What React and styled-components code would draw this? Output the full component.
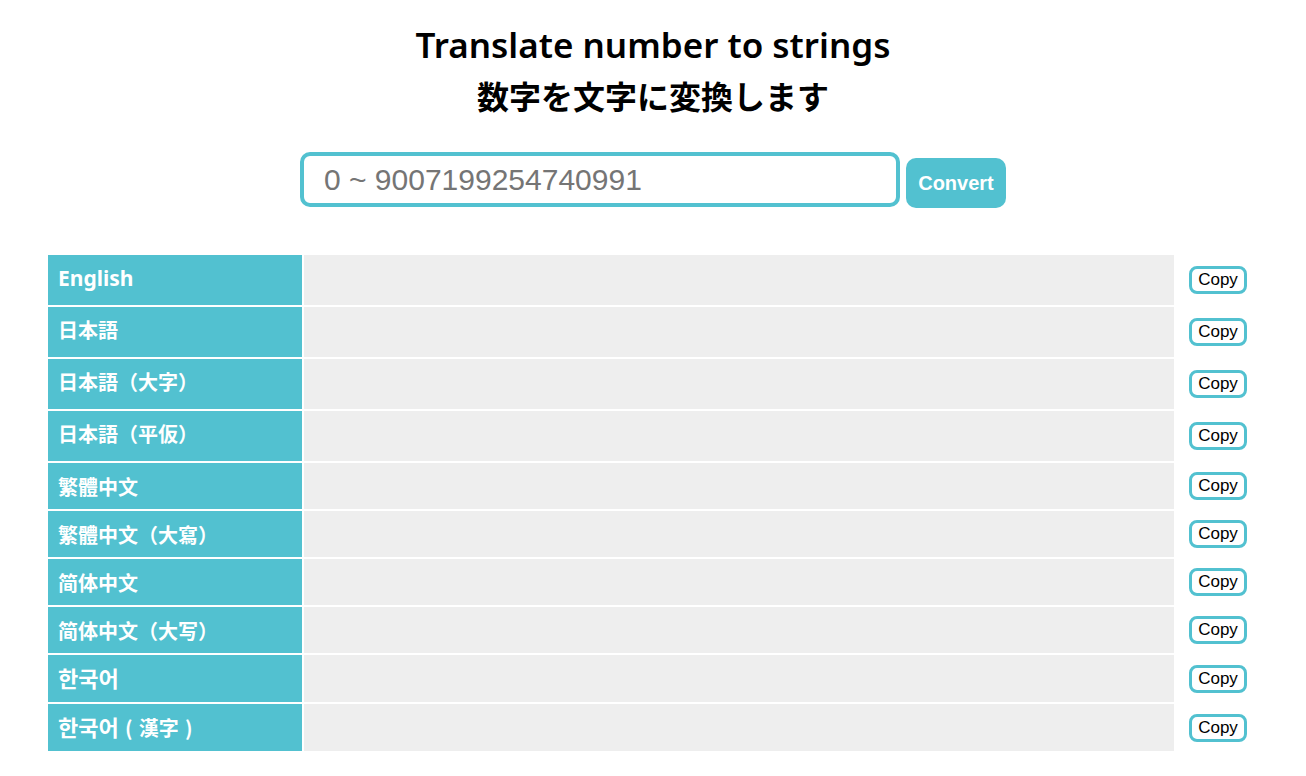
import React, { useState } from "react";
import styled, { createGlobalStyle } from "styled-components";

const accent = "#52c1d0";
const sans = '"Liberation Sans", Arial, sans-serif';

const fonts = {
  en: '"Noto Sans", sans-serif',
  ja: '"Noto Sans CJK JP", sans-serif',
  zh: '"Noto Sans CJK SC", sans-serif',
  ko: '"Noto Sans CJK KR", sans-serif',
  hanja: '"Noto Sans CJK TC", sans-serif',
};

const GlobalStyle = createGlobalStyle`
  *, *::before, *::after { box-sizing: border-box; }
  body { margin: 0; background: #fff; color: #000; }
`;

const Page = styled.main`
  padding: 19px 46px;
`;

const Title = styled.h1`
  margin: 0;
  text-align: center;
  font-family: ${fonts.ja};
  font-size: 32px;
  font-weight: 700;
  line-height: 48px;
`;

const TitleLine = styled.span`
  display: block;
`;

const LatinLine = styled(TitleLine)`
  font-family: ${fonts.en};
  font-size: 35px;
  font-weight: 600;
  line-height: 52px;
`;

const ConvertForm = styled.form`
  display: flex;
  justify-content: center;
  align-items: flex-end;
  gap: 6px;
  margin: 33px 0 45px;
`;

const NumberInput = styled.input`
  width: 600px;
  height: 55px;
  margin-bottom: 1px;
  padding: 0 20px;
  border: 4px solid ${accent};
  border-radius: 10px;
  background: #fff;
  font-family: ${sans};
  font-size: 30px;
  &::placeholder { color: #757575; }
`;

const ConvertButton = styled.button`
  width: 100px;
  height: 50px;
  padding: 0;
  border: 0;
  border-radius: 10px;
  background: ${accent};
  color: #fff;
  font-family: ${sans};
  font-size: 20px;
  font-weight: 700;
  cursor: pointer;
`;

const ResultTable = styled.table`
  width: 100%;
  table-layout: fixed;
  border-collapse: separate;
  border-spacing: 2px;
`;

const LabelColumn = styled.col`
  width: 254px;
`;

const CopyColumn = styled.col`
  width: 82px;
`;

const ResultRow = styled.tr`
  height: ${({ $height }) => $height}px;
`;

const LabelCell = styled.th`
  padding: ${({ $font }) => ($font === "zh" || $font === "ko" ? 9 : 8)}px 10px 6px;
  background: ${accent};
  color: #fff;
  text-align: left;
  vertical-align: top;
  font-family: ${({ $font }) => fonts[$font]};
  font-size: ${({ $font }) => ($font === "en" ? 21 : 20)}px;
  font-weight: 700;
  line-height: 30px;
`;

const Hangul = styled.span`
  font-family: ${fonts.ko};
  font-size: 22px;
  line-height: 24px;
`;

const Hanja = styled.span`
  font-family: ${fonts.hanja};
`;

const WideParen = styled.span`
  display: inline-block;
  width: 20px;
  text-align: center;
`;

const ResultCell = styled.td`
  padding: 0 10px;
  background: #eee;
  font-family: ${fonts.ja};
  font-size: 20px;
`;

const CopyCell = styled.td`
  padding: 0 0 0 13px;
  line-height: 0;
`;

const CopyButton = styled.button`
  width: 58px;
  height: 28px;
  padding: 0;
  border: 3px solid ${accent};
  border-radius: 8px;
  background: #fff;
  color: #000;
  font-family: ${sans};
  font-size: 17px;
  line-height: 20px;
  cursor: pointer;
`;

const rows = [
  { id: "en", font: "en", height: 50, label: "English" },
  { id: "ja", font: "ja", height: 50, label: "日本語" },
  { id: "ja-formal", font: "ja", height: 50, label: "日本語（大字）" },
  { id: "ja-kana", font: "ja", height: 50, label: "日本語（平仮）" },
  { id: "zh-hant", font: "zh", height: 46, label: "繁體中文" },
  { id: "zh-hant-formal", font: "zh", height: 46, label: "繁體中文（大寫）" },
  { id: "zh-hans", font: "zh", height: 46, label: "简体中文" },
  { id: "zh-hans-formal", font: "zh", height: 46, label: "简体中文（大写）" },
  { id: "ko", font: "ko", height: 47, label: <Hangul lang="ko">한국어</Hangul> },
  {
    id: "ko-hanja",
    font: "ko",
    height: 47,
    label: (
      <>
        <Hangul lang="ko">한국어</Hangul>
        <Hanja>
          <WideParen>(</WideParen>漢字<WideParen>)</WideParen>
        </Hanja>
      </>
    ),
  },
];

export default function App() {
  const [value, setValue] = useState("");

  return (
    <>
      <GlobalStyle />
      <Page>
        <Title>
          <LatinLine>Translate number to strings</LatinLine>
          <TitleLine lang="ja">数字を文字に変換します</TitleLine>
        </Title>
        <ConvertForm onSubmit={(event) => event.preventDefault()}>
          <NumberInput
            aria-label="Number"
            placeholder="0 ~ 9007199254740991"
            value={value}
            onChange={(event) => setValue(event.target.value)}
          />
          <ConvertButton type="submit">Convert</ConvertButton>
        </ConvertForm>
        <ResultTable>
          <colgroup>
            <LabelColumn />
            <col />
            <CopyColumn />
          </colgroup>
          <tbody>
            {rows.map(({ id, font, height, label }) => (
              <ResultRow key={id} $height={height}>
                <LabelCell scope="row" id={id} $font={font}>{label}</LabelCell>
                <ResultCell />
                <CopyCell>
                  <CopyButton type="button" aria-describedby={id}>Copy</CopyButton>
                </CopyCell>
              </ResultRow>
            ))}
          </tbody>
        </ResultTable>
      </Page>
    </>
  );
}
